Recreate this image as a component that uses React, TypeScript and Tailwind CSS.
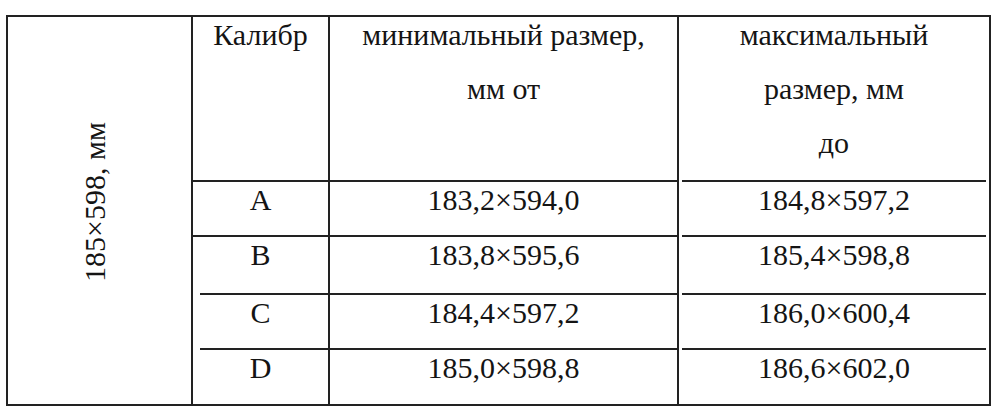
import React from 'react';

const rows = [
  { cal: 'A', min: '183,2×594,0', max: '184,8×597,2', calLine: 'h-[2px] bg-[#222]' },
  { cal: 'B', min: '183,8×595,6', max: '185,4×598,8', calLine: 'h-[2px] bg-[#222]' },
  { cal: 'C', min: '184,4×597,2', max: '186,0×600,4', calLine: 'h-[2px] bg-[#222] ml-[7px]' },
  { cal: 'D', min: '185,0×598,8', max: '186,6×602,0', calLine: 'h-[2px] bg-[#222] ml-[7px]' },
];

export default function App() {
  return (
    <div className="w-[1000px] h-[420px] bg-white pt-[15px] pl-[6px] text-[#141414] text-[30px] leading-[36px] [font-family:Liberation_Serif,serif]">
      <div className="w-[985px] border-2 border-[#222] grid grid-cols-[183px_137px_349px_312px] grid-rows-[163px_55px_58px_55px_56px]">
        {/* size label, rotated */}
        <div className="row-span-5 flex items-center justify-center pb-[18px] pr-[10px]">
          <span className="-rotate-90 whitespace-nowrap">185×598, мм</span>
        </div>

        {/* header */}
        <div className="border-l-2 border-[#222] text-center">Калибр</div>
        <div className="border-l-2 border-[#222] flex flex-col items-center gap-[18px]">
          <span>минимальный размер,</span>
          <span>мм от</span>
        </div>
        <div className="border-l-2 border-[#222] flex flex-col items-center gap-[18px]">
          <span>максимальный</span>
          <span>размер, мм</span>
          <span>до</span>
        </div>

        {rows.map((r) => (
          <React.Fragment key={r.cal}>
            <div className="border-l-2 border-[#222] flex flex-col">
              <div className={r.calLine} />
              <span className="text-center">{r.cal}</span>
            </div>
            <div className="border-l-2 border-[#222] flex flex-col">
              <div className="h-[2px] bg-[#222]" />
              <span className="text-center">{r.min}</span>
            </div>
            <div className="border-l-2 border-[#222] flex flex-col">
              <div className="h-[2px] bg-[#222] ml-[3px] mr-[3px]" />
              <span className="text-center">{r.max}</span>
            </div>
          </React.Fragment>
        ))}
      </div>
    </div>
  );
}
